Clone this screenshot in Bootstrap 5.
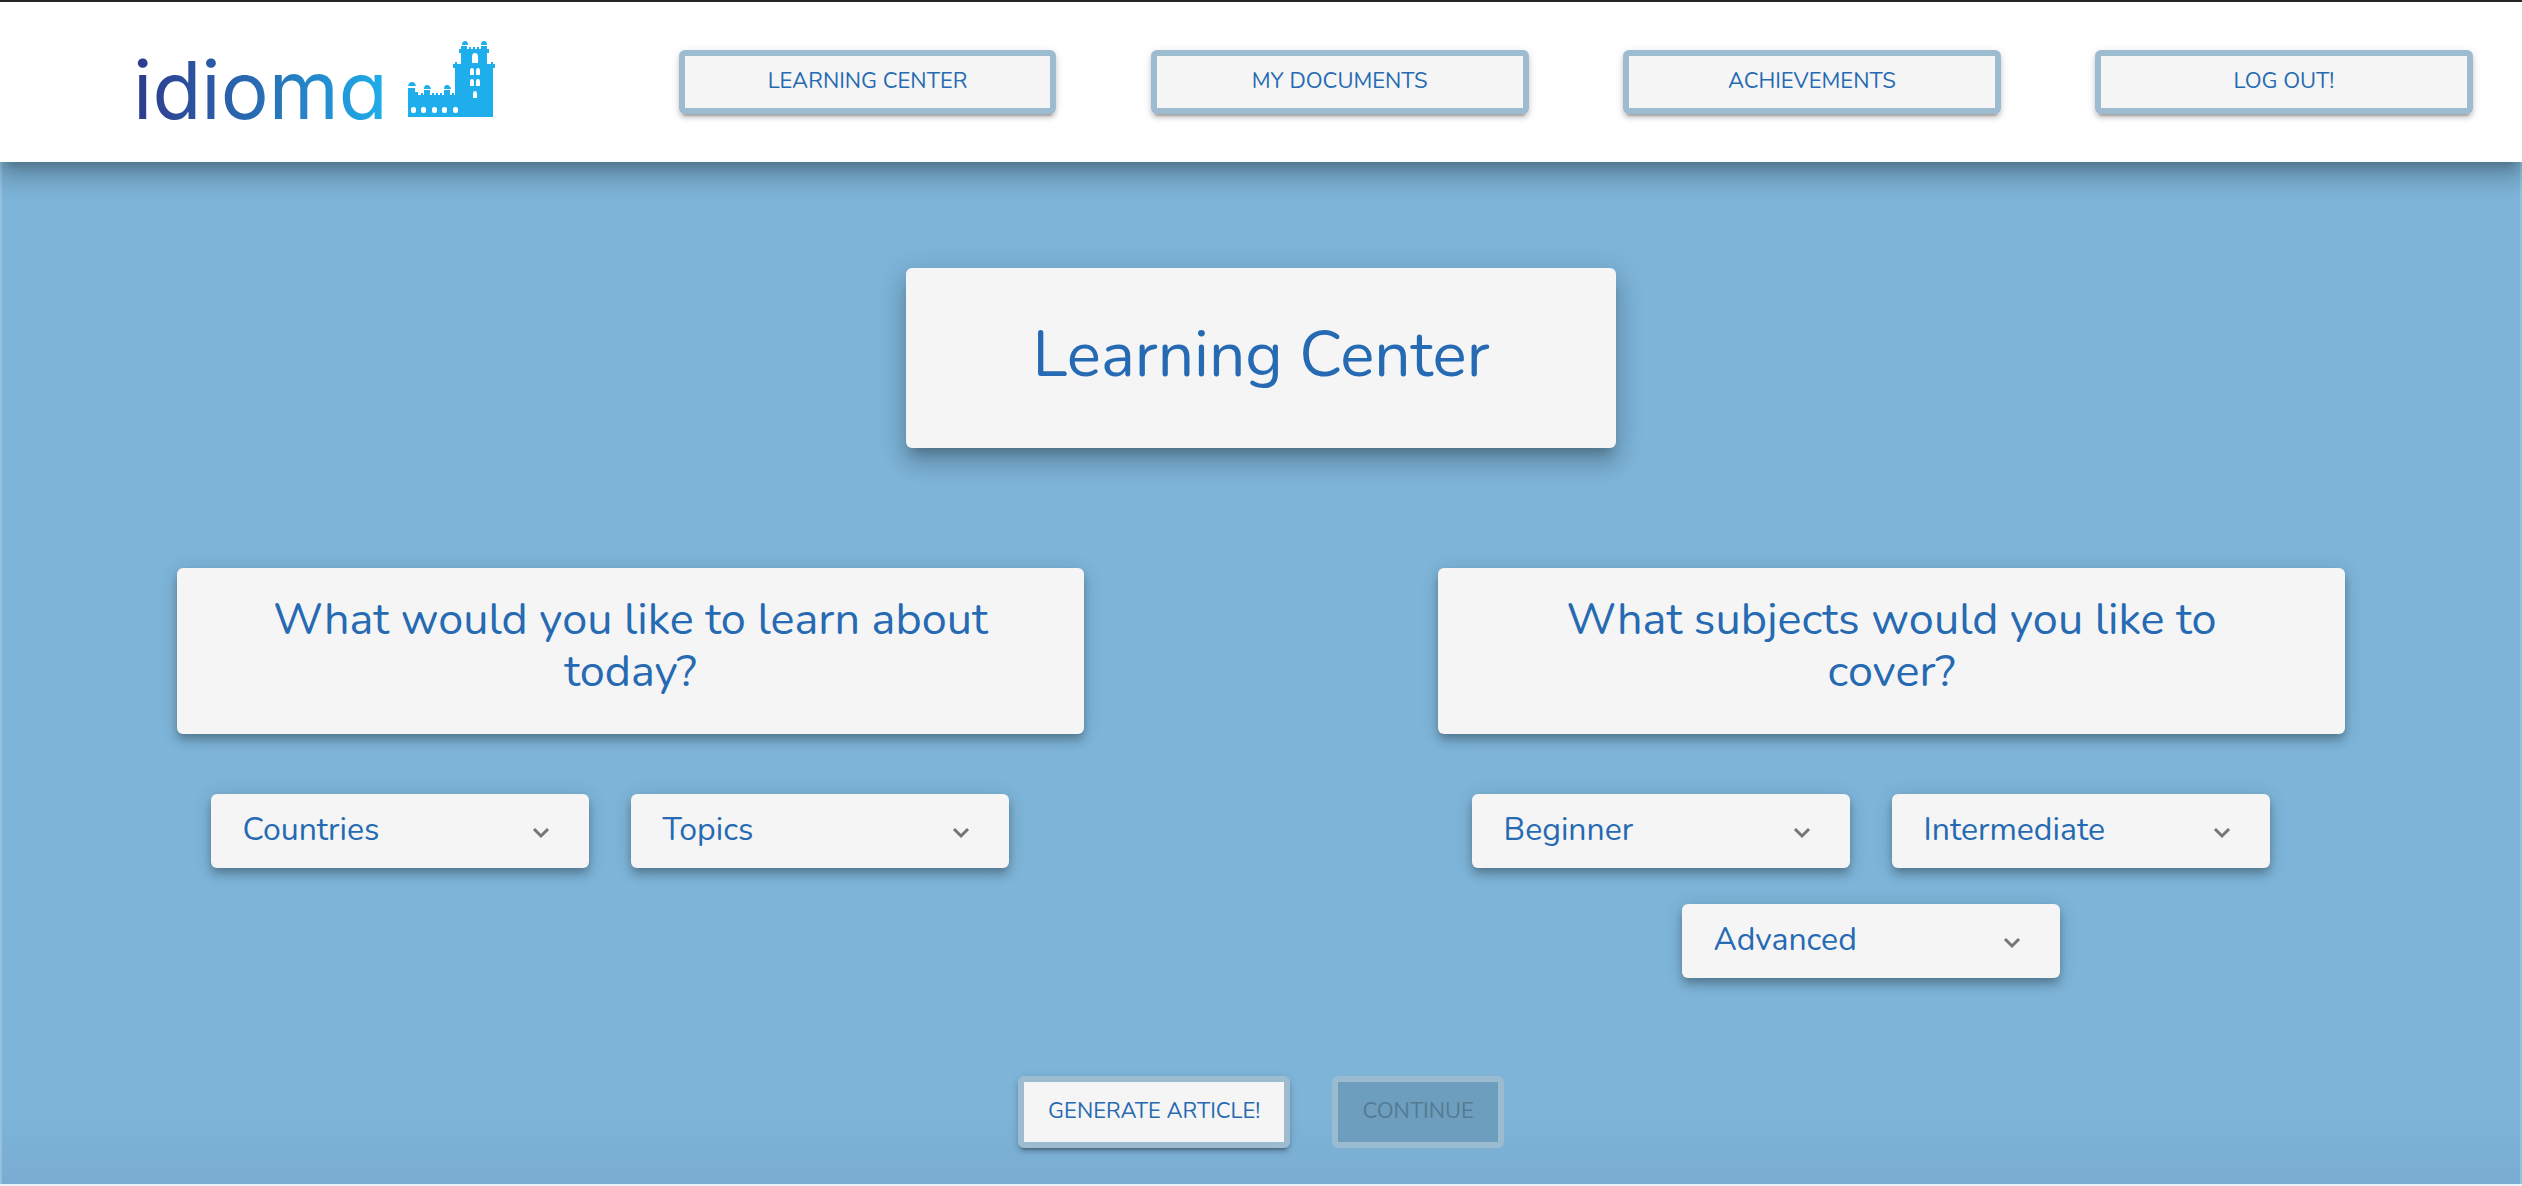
<!DOCTYPE html>
<html lang="en">
<head>
<meta charset="utf-8">
<meta name="viewport" content="width=device-width, initial-scale=1">
<title>idioma – Learning Center</title>
<link rel="stylesheet" href="https://cdn.jsdelivr.net/npm/bootstrap@5.3.0/dist/css/bootstrap.min.css">
<style>
  :root {
    --ink: #256ab2; --paper: #f5f5f5; --edge: #9dbcd0; --sky: #7db4d8;
    --lift-1: 0 6px 2px -4px rgba(0,0,0,.2), 0 4px 4px rgba(0,0,0,.14), 0 2px 10px rgba(0,0,0,.12);
    --lift-2: 0 4px 8px -2px rgba(0,0,0,.2), 0 8px 10px rgba(0,0,0,.14), 0 2px 20px rgba(0,0,0,.12);
    --lift-3: 0 10px 10px -6px rgba(0,0,0,.2), 0 16px 20px 2px rgba(0,0,0,.14), 0 6px 28px 4px rgba(0,0,0,.12);
  }
  body {
    font-family: Nunito, Lato, sans-serif; font-weight: 400; color: var(--ink);
    background: var(--sky); border-bottom: 2px solid #eaf3fa;
  }
  .site-header { border-top: 2px solid #262427; min-height: 162px; padding: 0 2px; z-index: 1; box-shadow: var(--lift-3); }
  .brand { padding: 39px 0 0 131px; }
  .brand-word {
    font: 400 80px/98px Inter, Lato, sans-serif; font-feature-settings: "cv11" 1;
    background: linear-gradient(90deg, #2e3a8c, #2872b8 50%, #1eaeec 92%);
    -webkit-background-clip: text; background-clip: text; color: transparent;
    width: 275px;
  }
  .page-body {
    min-height: calc(100vh - 164px);
    background: linear-gradient(to top, rgba(110,150,190,.25), rgba(110,150,190,0) 70px);
    box-shadow: inset 2px 0 #93c1de, inset -2px 0 #93c1de;
  }
  .box-btn {
    --bs-btn-bg: var(--paper); --bs-btn-color: var(--ink); --bs-btn-border-color: var(--edge);
    --bs-btn-hover-bg: #e4eef5; --bs-btn-hover-color: var(--ink); --bs-btn-hover-border-color: var(--edge);
    --bs-btn-border-width: 6px; --bs-btn-border-radius: 6px; --bs-btn-font-size: 22px;
    --bs-btn-padding-x: 24px; --bs-btn-line-height: 36px;
    --bs-btn-disabled-bg: #6d9ebd; --bs-btn-disabled-color: #537b94; --bs-btn-disabled-border-color: #9bbbd0;
    --bs-btn-disabled-opacity: 1; text-transform: uppercase;
    box-shadow: var(--lift-1);
  }
  .box-btn:disabled { box-shadow: none; }
  .nav-btn { padding-top: 7px; padding-bottom: 9px; width: 80%; }
  .act-btn { padding-top: 11px; padding-bottom: 13px; }
  .paper { background: var(--paper); border-radius: 6px; }
  .hero { width: 710px; max-width: 90%; height: 180px; margin-top: 106px; padding-top: 43px; box-shadow: var(--lift-3); }
  .hero h1 { font-size: 64px; line-height: 88px; }
  .panels { margin-top: 120px; }
  .ask { width: 72%; padding: 26px 64px 36px; box-shadow: var(--lift-2); }
  .ask h2 { font-size: 45px; line-height: 52px; }
  .picks { width: 840px; max-width: 100%; margin: 60px 42px 0 0; row-gap: 36px; }
  .pick {
    --bs-btn-color: var(--ink); --bs-btn-bg: var(--paper); --bs-btn-border-width: 0;
    --bs-btn-hover-bg: #eef3f7; --bs-btn-hover-color: var(--ink);
    --bs-btn-font-size: 32px; --bs-btn-line-height: 72px; --bs-btn-border-radius: 6px;
    width: 378px; height: 74px; margin: 0 21px; padding: 0 32px 2px; box-shadow: var(--lift-2);
  }
  .pick svg { width: 32px; }
  .actions { gap: 42px; margin-top: 98px; padding-bottom: 36px; }
</style>
<script src="https://cdn.jsdelivr.net/npm/bootstrap@5.3.0/dist/js/bootstrap.bundle.min.js"></script>
</head>
<body>
<header class="site-header bg-white position-relative">
  <div class="row g-0">
    <div class="col-3">
      <a href="#" class="brand d-flex align-items-start text-decoration-none" aria-label="idioma home">
        <span class="brand-word">idioma</span>
        <svg width="88" height="78" viewBox="0 0 88 78" fill="#1eaeec" aria-hidden="true">
          <path d="M0 76V47h7v4h3v3h3v-2h2v2h1v-5h6v5h2v-2h2v2h2v-2h2v2h2v-2h2v2h2v-5h6v5h2v-2h2v2h1V27h-2v-4h2v-2h2v2h4v-11h-2V8h2V5h6v3h2V6h2v2h2V6h2v2h2V6h2v2h2V5h6v3h2v4h-2v11h4v-2h2v2h2v4h-2v49z"/>
          <path d="M0 45q1-4 4-4t4 4zM16 48q0-4 3-4t4 4zM36 48q0-4 3-4t4 4zM54 4q0-4 3-4t3 4zM73 4q0-4 3-4t3 4z"/>
          <g fill="#fff"><rect x="3" y="66" width="5" height="6" rx="2"/><rect x="13" y="66" width="5" height="6" rx="2"/><rect x="24" y="66" width="5" height="6" rx="2"/><rect x="34" y="66" width="5" height="6" rx="2"/><rect x="45" y="66" width="5" height="6" rx="2"/>
          <path d="M64 22v-6q0-4 3-4t3 4v6zM62 34v-4q0-3 2-3t2 3v4zM68 34v-4q0-3 2-3t2 3v4zM62 45v-4q0-3 2-3t2 3v4zM68 45v-4q0-3 2-3t2 3v4zM65 57v-4q0-3 2-3t2 3v4z"/></g>
        </svg>
      </a>
    </div>
    <nav class="col-9 row g-0 pt-5 text-center" aria-label="Main">
      <div class="col-3"><button type="button" class="btn box-btn nav-btn">Learning Center</button></div>
      <div class="col-3"><button type="button" class="btn box-btn nav-btn">My Documents</button></div>
      <div class="col-3"><button type="button" class="btn box-btn nav-btn">Achievements</button></div>
      <div class="col-3"><button type="button" class="btn box-btn nav-btn">Log Out!</button></div>
    </nav>
  </div>
</header>
<main class="page-body d-flex flex-column align-items-center">
  <div class="paper hero text-center"><h1 class="m-0 fw-normal">Learning Center</h1></div>
  <div class="panels row g-0 w-100">
    <section class="col-6 d-flex flex-column align-items-center">
      <div class="paper ask text-center"><h2 class="m-0 fw-normal">What would you like to learn about today?</h2></div>
      <div class="picks d-flex flex-wrap justify-content-center">
        <button type="button" class="btn pick d-flex justify-content-between align-items-center" aria-expanded="false">Countries <svg viewBox="0 0 32 32" fill="none" stroke="#757575" stroke-width="3" aria-hidden="true"><path d="M9 15l7 7 7-7"/></svg></button>
        <button type="button" class="btn pick d-flex justify-content-between align-items-center" aria-expanded="false">Topics <svg viewBox="0 0 32 32" fill="none" stroke="#757575" stroke-width="3" aria-hidden="true"><path d="M9 15l7 7 7-7"/></svg></button>
      </div>
    </section>
    <section class="col-6 d-flex flex-column align-items-center">
      <div class="paper ask text-center"><h2 class="m-0 fw-normal">What subjects would you like to cover?</h2></div>
      <div class="picks d-flex flex-wrap justify-content-center">
        <button type="button" class="btn pick d-flex justify-content-between align-items-center" aria-expanded="false">Beginner <svg viewBox="0 0 32 32" fill="none" stroke="#757575" stroke-width="3" aria-hidden="true"><path d="M9 15l7 7 7-7"/></svg></button>
        <button type="button" class="btn pick d-flex justify-content-between align-items-center" aria-expanded="false">Intermediate <svg viewBox="0 0 32 32" fill="none" stroke="#757575" stroke-width="3" aria-hidden="true"><path d="M9 15l7 7 7-7"/></svg></button>
        <button type="button" class="btn pick d-flex justify-content-between align-items-center" aria-expanded="false">Advanced <svg viewBox="0 0 32 32" fill="none" stroke="#757575" stroke-width="3" aria-hidden="true"><path d="M9 15l7 7 7-7"/></svg></button>
      </div>
    </section>
  </div>
  <div class="actions d-flex justify-content-center">
    <button type="button" class="btn box-btn act-btn">Generate Article!</button>
    <button type="button" class="btn box-btn act-btn" disabled>Continue</button>
  </div>
</main>
</body>
</html>
